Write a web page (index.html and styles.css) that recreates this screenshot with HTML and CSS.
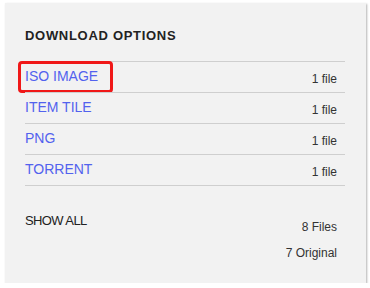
FILE: index.html
```html
<!doctype html>
<html lang="en-us">
	<head>
		<meta charset="utf-8">
		<title>Download Options</title>
		<link rel="stylesheet" href="styles.css">
	</head>
	<body>
		<div class="card">
			<h2 class="title">DOWNLOAD OPTIONS</h2>

			<div class="formats">
				<div class="format-row">
					<a href="#" class="format-link">ISO IMAGE</a>
					<span class="format-count">1 file</span>
					<span class="highlight"></span>
				</div>
				<div class="format-row">
					<a href="#" class="format-link">ITEM TILE</a>
					<span class="format-count">1 file</span>
				</div>
				<div class="format-row">
					<a href="#" class="format-link">PNG</a>
					<span class="format-count">1 file</span>
				</div>
				<div class="format-row">
					<a href="#" class="format-link">TORRENT</a>
					<span class="format-count">1 file</span>
				</div>
			</div>

			<div class="summary">
				<div class="show-all">SHOW ALL</div>
				<div class="totals">
					<div>8 Files</div>
					<div>7 Original</div>
				</div>
			</div>
		</div>
	</body>
</html>
```

FILE: styles.css
```css
body {
	margin: 0;
	background: #fff;
	color: #333;
	font-family: "Liberation Sans", Arial, sans-serif;
}
.card {
	margin: 3px 0 0 5px;
	width: 361px;
	height: 280px;
	box-sizing: border-box;
	padding: 25px 21px 0 20px;
	background: #f2f2f2;
	box-shadow: 1px 1px 2px rgba(0, 0, 0, 0.3);
}
.title {
	margin: 0 0 17px 0;
	font-size: 13px;
	line-height: 16px;
	font-weight: bold;
	letter-spacing: 0.7px;
	color: #222;
}
.format-row {
	position: relative;
	display: flex;
	justify-content: space-between;
	border-top: 1px solid #cfcfcf;
	padding: 6px 8px 8px 0;
	height: 16px;
}
.format-row:last-child {
	border-bottom: 1px solid #cfcfcf;
}
.format-link {
	font-size: 14px;
	line-height: 16px;
	color: #5262ee;
	text-decoration: none;
}
.format-count {
	font-size: 12px;
	line-height: 16px;
	padding-top: 3px;
	color: #333;
}
.highlight {
	position: absolute;
	left: -7px;
	top: -1px;
	width: 95px;
	height: 32px;
	box-sizing: border-box;
	border: 3px solid #f01818;
	border-radius: 4px;
}
.summary {
	display: flex;
	justify-content: space-between;
	padding-right: 8px;
}
.show-all {
	margin-top: 27px;
	font-size: 13px;
	line-height: 16px;
	letter-spacing: -0.6px;
	color: #222;
}
.totals {
	margin-top: 33px;
	display: flex;
	flex-direction: column;
	align-items: flex-end;
	gap: 10px;
	font-size: 12px;
	line-height: 16px;
}
```
